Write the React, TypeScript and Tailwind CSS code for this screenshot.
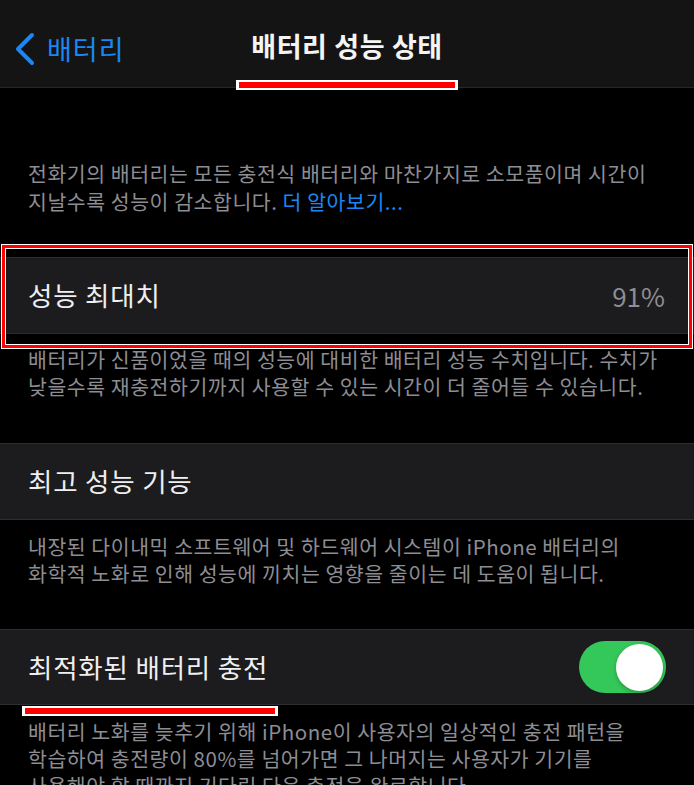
import React from "react";

const FONT = '"Noto Sans CJK KR", "Noto Sans", sans-serif';

function Row({ label, right }: { label: string; right?: React.ReactNode }) {
  return (
    <div className="h-[77px] bg-[#1c1c1e] border-y border-[#2e2e30] flex items-center justify-between pl-[28px] pr-[29px]">
      <span className="text-[26.5px] tracking-[0.8px] text-[#efeff1] leading-none">{label}</span>
      {right}
    </div>
  );
}

function Para({ children, className = "" }: { children: React.ReactNode; className?: string }) {
  return (
    <p className={"px-[28px] text-[20.5px] tracking-[0.55px] leading-[27px] text-[#8d8d93] whitespace-nowrap " + className}>
      {children}
    </p>
  );
}

export default function App() {
  return (
    <div className="w-[694px] h-[785px] bg-black overflow-hidden" style={{ fontFamily: FONT }}>
      {/* Nav bar */}
      <div className="relative h-[88px] bg-[#141414] border-b border-[#262628] flex items-center">
        <div className="absolute left-[14px] top-[32px] flex items-center">
          <svg width="22" height="34" viewBox="0 0 22 34" fill="none">
            <path d="M18 3 L4 17 L18 31" stroke="#1a87f5" strokeWidth="4" strokeLinecap="round" strokeLinejoin="round" />
          </svg>
          <span className="ml-[11px] text-[27px] tracking-[1px] leading-none text-[#1a87f5] -mt-[1px]">배터리</span>
        </div>
        <div className="w-full text-center text-[27px] tracking-[0.6px] font-semibold text-[#f4f4f4] leading-none mt-[3px]">
          배터리 성능 상태
        </div>
        <div className="absolute left-1/2 -translate-x-1/2 top-[80px] w-[222px] h-[10px] bg-white px-[3px] py-[2px]">
          <div className="w-full h-full bg-[#ff0000]" />
        </div>
      </div>

      <p className="mt-[71px] px-[28px] text-[20.5px] tracking-[0.55px] leading-[28px] text-[#8d8d93] whitespace-nowrap">
        전화기의 배터리는 모든 충전식 배터리와 마찬가지로 소모품이며 시간이
        <br />
        지날수록 성능이 감소합니다. <span className="text-[#1a87f5]">더 알아보기...</span>
      </p>

      <div className="mt-[42px] relative">
        <Row label="성능 최대치" right={<span className="text-[26px] leading-none text-[#8e8e93]">91%</span>} />
        <div className="absolute left-[1px] right-[1px] top-[-13px] bottom-[-15px] border border-white">
          <div className="w-full h-full border-[3px] border-[#ff0000]">
            <div className="w-full h-full border border-white" />
          </div>
        </div>
      </div>
      <Para className="pt-[12px] pb-[43px]">
        배터리가 신품이었을 때의 성능에 대비한 배터리 성능 수치입니다. 수치가
        <br />
        낮을수록 재충전하기까지 사용할 수 있는 시간이 더 줄어들 수 있습니다.
      </Para>

      <Row label="최고 성능 기능" />
      <Para className="pt-[13px] pb-[42px]">
        내장된 다이내믹 소프트웨어 및 하드웨어 시스템이 iPhone 배터리의
        <br />
        화학적 노화로 인해 성능에 끼치는 영향을 줄이는 데 도움이 됩니다.
      </Para>

      <div className="relative">
        <div className="h-[76px] bg-[#1c1c1e] border-y border-[#2e2e30] flex items-center justify-between pl-[28px] pr-[28px]">
          <span className="text-[26.5px] tracking-[0.8px] text-[#efeff1] leading-none">최적화된 배터리 충전</span>
          <div className="w-[87px] h-[52px] rounded-full bg-[#34c759] flex items-center justify-end pr-[3px]">
            <div className="w-[47px] h-[47px] rounded-full bg-white shadow-[0_2px_4px_rgba(0,0,0,0.25)]" />
          </div>
        </div>
        <div className="absolute left-[22px] top-[77px] w-[256px] h-[10px] bg-white px-[3px] py-[2px]">
          <div className="w-full h-full bg-[#ff0000]" />
        </div>
      </div>
      <Para className="pt-[13px]">
        배터리 노화를 늦추기 위해 iPhone이 사용자의 일상적인 충전 패턴을
        <br />
        학습하여 충전량이 80%를 넘어가면 그 나머지는 사용자가 기기를
        <br />
        사용해야 할 때까지 기다린 다음 충전을 완료합니다.
      </Para>
    </div>
  );
}
